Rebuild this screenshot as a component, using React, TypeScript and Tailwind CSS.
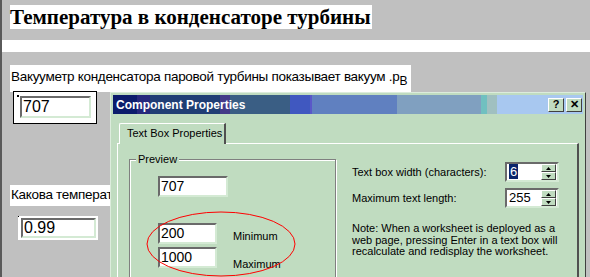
import React from "react";

const sunken =
  "border-2 border-t-[#6a6a6a] border-l-[#6a6a6a] border-b-[#d4ead4] border-r-[#d4ead4] bg-white";

const titleGradient =
  "bg-[linear-gradient(to_right,#0c1c6c_0px,#0c1c6c_24px,#26287c_24px,#26287c_37px,#203e74_37px,#203e74_107px,#443a88_107px,#443a88_117px,#3a5e84_117px,#3a5e84_177px,#4058c0_177px,#4058c0_197px,#5a58c8_197px,#5a58c8_199px,#6080c0_199px,#6080c0_284px,#80a0c0_284px,#80a0c0_368px,#70c0c0_368px,#70c0c0_374px,#a0c0c0_374px,#a0c0c0_384px,#a8c8f0_384px,#a8c8f0_100%)]";

function SpinButton({ up }: { up?: boolean }) {
  return (
    <div className="flex h-[8px] w-[15px] items-center justify-center border border-t-white border-l-white border-b-[#404040] border-r-[#404040] bg-[#c0dcc0]">
      <svg width="5" height="3" viewBox="0 0 5 3">
        {up ? <path d="M2.5 0 L5 3 L0 3 Z" fill="#000" /> : <path d="M0 0 L5 0 L2.5 3 Z" fill="#000" />}
      </svg>
    </div>
  );
}

function SpinBox({ value, selected }: { value: string; selected?: boolean }) {
  return (
    <div className={`flex h-[20px] w-[54px] ${sunken}`}>
      <div className="flex-1 pl-[2px] text-[13px] leading-[16px]">
        {selected ? <span className="bg-[#0a246a] px-[1px] text-white">{value}</span> : value}
      </div>
      <div className="flex flex-col pr-[1px]">
        <SpinButton up />
        <SpinButton />
      </div>
    </div>
  );
}

function TitleButton({ children }: { children: React.ReactNode }) {
  return (
    <div className="flex h-[14px] w-[16px] items-center justify-center border border-t-white border-l-white border-b-[#404040] border-r-[#404040] bg-[#c0dcc0] text-[11px] font-bold leading-none text-black">
      {children}
    </div>
  );
}

export default function App() {
  return (
    <div className="relative h-[277px] w-[590px] overflow-hidden border-l-2 border-l-[#5a5a5a] bg-[#c0c0c0] font-['Liberation_Sans',Arial,sans-serif] text-black">
      <div className="flex flex-col items-start">
        <div className="ml-[8px] mt-[5px] h-[24px] bg-white pr-[1px] font-['Liberation_Serif','Times_New_Roman',serif] text-[21px] font-bold leading-[24px]">
          Температура в конденсаторе турбины
        </div>
        <div className="mt-[11px] h-[12px] w-full bg-white" />
        <div className="ml-[8px] mt-[13px] h-[27px] bg-white pl-[1px] pr-[4px] pt-[3px] text-[13.5px] leading-[18px] tracking-[-0.3px]">
          Вакууметр конденсатора паровой турбины показывает вакуум .p
          <span className="relative top-[4px] text-[12px]">B</span>
        </div>

        <div className="relative -mt-[1px] ml-[11px] h-[33px] w-[84px] border border-black bg-white pl-[6px] pt-[4px]">
          <div className="absolute left-[3px] top-[3px] h-[2px] w-[2px] bg-black" />
          <div className={`h-[22px] w-[71px] ${sunken} border-b-[#1a2ac0] pl-[1px] text-[16px] leading-[18px]`}>707</div>
        </div>

        <div className="ml-[8px] mt-[61px] h-[21px] whitespace-nowrap bg-white pl-[1px] pr-[2px] pt-[1px] text-[13.5px] leading-[18px] tracking-[-0.3px]">
          Какова температ
        </div>

        <div className="relative ml-[16px] mt-[10px] h-[24px] w-[80px] bg-white p-[2px] pl-[3px]">
          <div className="absolute left-0 top-0 h-[1px] w-[1px] bg-black" />
          <div className={`h-[20px] w-[75px] ${sunken} pl-[1px] text-[16px] leading-[16px]`}>0.99</div>
        </div>
      </div>

      {/* Component Properties dialog */}
      <div className="absolute left-[108px] top-[92px] h-[190px] w-[476px] border border-t-[#dcecdc] border-l-[#dcecdc] border-b-[#404040] border-r-[#404040] bg-[#c0dcc0] p-[2px] text-[11px]">
        <div className={`flex h-[19px] items-center justify-between pl-[3px] pr-[1px] ${titleGradient}`}>
          <span className="text-[12px] font-bold text-white">Component Properties</span>
          <div className="flex gap-[2px]">
            <TitleButton>?</TitleButton>
            <TitleButton>✕</TitleButton>
          </div>
        </div>

        <div className="mx-[4px] mt-[9px]">
          <div className="relative z-10 ml-[2px] h-[21px] w-[107px] rounded-tl-[2px] border-l border-t border-r-2 border-l-white border-t-white border-r-[#505050] bg-[#c0dcc0] pl-[7px] pt-[3px] leading-[13px]">
            Text Box Properties
          </div>
          <div className="-mt-[1px] flex h-[140px] border-l border-t border-r-2 border-l-white border-t-white border-r-[#505050]">
            <div className="relative ml-[11px] mt-[15px] h-[130px] w-[207px] border border-[#808080] shadow-[1px_1px_0_#fff,inset_1px_1px_0_#fff]">
              <span className="absolute -top-[7px] left-[6px] bg-[#c0dcc0] px-[2px] leading-[13px]">Preview</span>
              <div className={`ml-[28px] mt-[16px] h-[21px] w-[70px] ${sunken} pl-[1px] text-[14px] leading-[17px]`}>707</div>
              <div className="ml-[28px] mt-[26px] flex items-end gap-[16px]">
                <div className={`h-[21px] w-[59px] ${sunken} pl-[1px] text-[14px] leading-[17px]`}>200</div>
                <span className="pb-[1px] leading-[13px]">Minimum</span>
              </div>
              <div className="ml-[28px] mt-[3px] flex items-end gap-[16px]">
                <div className={`h-[21px] w-[59px] ${sunken} pl-[1px] text-[14px] leading-[17px]`}>1000</div>
                <span className="-mb-[3px] leading-[13px]">Maximum</span>
              </div>
            </div>

            <div className="ml-[16px] mt-[18px] w-[207px]">
              <div className="flex items-center justify-between">
                <span>Text box width (characters):</span>
                <SpinBox value="6" selected />
              </div>
              <div className="mt-[6px] flex items-center justify-between">
                <span>Maximum text length:</span>
                <SpinBox value="255" />
              </div>
              <p className="mt-[15px] leading-[11.5px]">
                Note: When a worksheet is deployed as a
                <br />
                web page, pressing Enter in a text box will
                <br />
                recalculate and redisplay the worksheet.
              </p>
            </div>
          </div>
        </div>
      </div>

      {/* red annotation ellipse */}
      <svg className="absolute left-[144px] top-[211px]" width="151" height="67" viewBox="0 0 151 67">
        <ellipse cx="75" cy="33" rx="74" ry="32" fill="none" stroke="#ff0000" strokeWidth="1" />
      </svg>
    </div>
  );
}
